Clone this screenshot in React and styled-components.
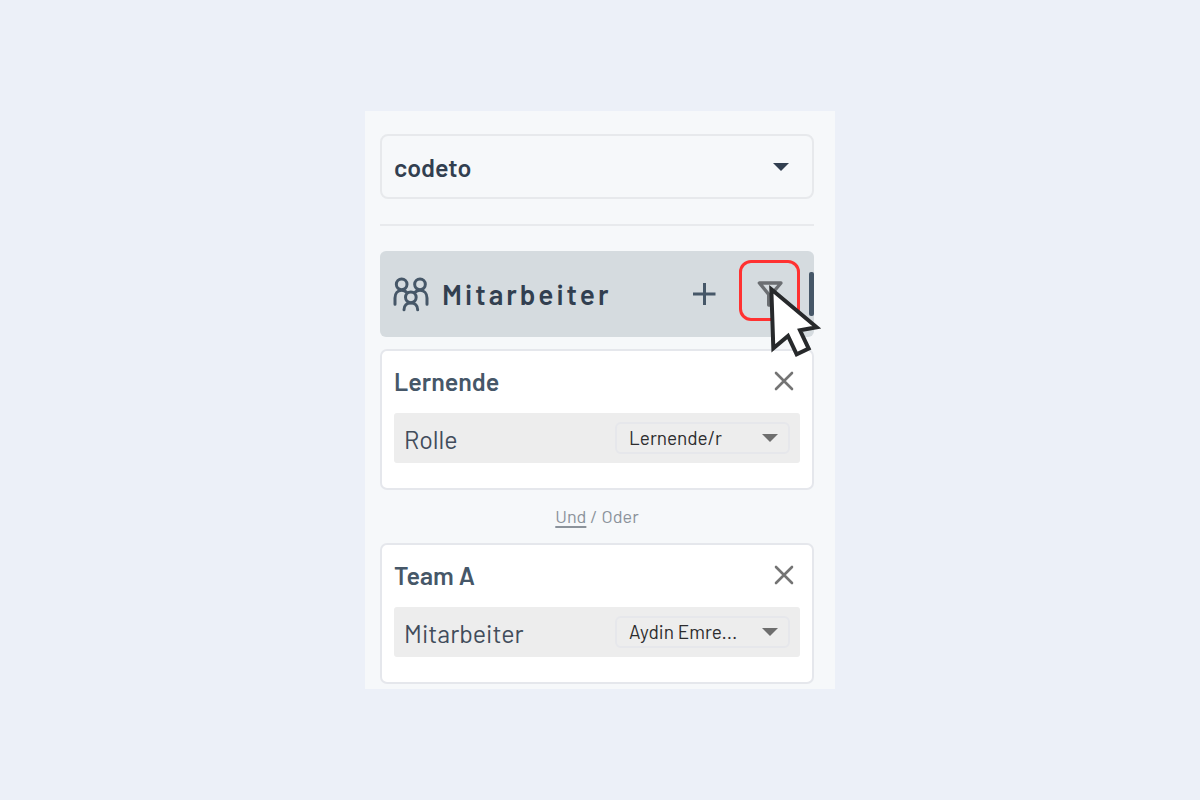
import React from "react";
import styled, { createGlobalStyle } from "styled-components";

const GlobalStyle = createGlobalStyle`
  *, *::before, *::after { box-sizing: border-box; }
  body {
    margin: 0;
    background: #ecf0f8;
    font-family: Barlow, Roboto, "Liberation Sans", sans-serif;
    color: #323f50;
  }
  button, select { font: inherit; color: inherit; }
`;

const Page = styled.main`
  min-height: 100vh;
  display: flex;
  align-items: center;
  justify-content: center;
`;

const Panel = styled.aside`
  width: 100%;
  max-width: 470px;
  padding: 23px 21px 5px 15px;
  background: #f6f8fa;
`;

const SelectBox = styled.div`
  position: relative;
  width: ${(p) => (p.$small ? "175px" : "100%")};
  color: ${(p) => (p.$small ? "#6e6e6e" : "#323f50")};
`;

const Select = styled.select`
  appearance: none;
  display: block;
  width: 100%;
  height: ${(p) => (p.$small ? "32px" : "65px")};
  padding: 0 ${(p) => (p.$small ? "32px" : "48px")} ${(p) => (p.$small ? "2px" : "0")} 12px;
  border: 2px solid ${(p) => (p.$small ? "#e6e7eb" : "#e7e9ec")};
  border-radius: ${(p) => (p.$small ? "6px" : "8px")};
  background: transparent;
  color: ${(p) => (p.$small ? "#2c2c2e" : "#323f50")};
  font-size: ${(p) => (p.$small ? "19px" : "25px")};
  font-weight: ${(p) => (p.$small ? 400 : 600)};
`;

const Arrow = styled.svg`
  position: absolute;
  top: 50%;
  right: ${(p) => (p.$small ? "12px" : "25px")};
  margin-top: -4px;
  pointer-events: none;
`;

const Divider = styled.hr`
  height: 2px;
  margin: 25px 0;
  border: 0;
  background: #e8eaed;
`;

const SectionHeader = styled.header`
  display: flex;
  align-items: center;
  height: 86px;
  margin-bottom: 12px;
  padding-left: 13px;
  border-radius: 6px;
  background: #d5dbdf;
`;

const SectionTitle = styled.h1`
  flex: 1;
  margin: 0 0 0 13px;
  font-size: 28px;
  line-height: 34px;
  font-weight: 600;
  letter-spacing: 3px;
`;

const IconButton = styled.button`
  display: grid;
  place-items: center;
  width: 32px;
  height: 32px;
  padding: 0;
  border: 0;
  background: transparent;
  color: ${(p) => p.$color};
  cursor: pointer;
`;

const FilterSlot = styled.div`
  position: relative;
  align-self: stretch;
  display: grid;
  place-items: center;
  width: 61px;
  margin: 0 9px 0 19px;
`;

const Highlight = styled.span`
  position: absolute;
  top: 9px;
  left: 0;
  width: 61px;
  height: 61px;
  border: 3px solid #ff3131;
  border-radius: 12px;
  pointer-events: none;
`;

const Pointer = styled.svg`
  position: absolute;
  top: 33px;
  left: 29px;
  z-index: 1;
  pointer-events: none;
`;

const ActiveBar = styled.span`
  width: 5px;
  height: 44px;
  border-radius: 2px;
  background: #465768;
`;

const Card = styled.section`
  padding: 10px 12px 25px;
  border: 2px solid #e5e7ec;
  border-radius: 7px;
  background: #fff;
`;

const CardHead = styled.div`
  display: flex;
  align-items: center;
  justify-content: space-between;
  height: 40px;
  margin-bottom: 12px;
`;

const CardTitle = styled.h2`
  margin: 0;
  color: #465768;
  font-size: 25px;
  line-height: 30px;
  font-weight: 600;
`;

const Field = styled.div`
  display: flex;
  align-items: center;
  justify-content: space-between;
  height: 50px;
  padding: 0 10px;
  border-radius: 3px;
  background: #ededed;
`;

const FieldLabel = styled.label`
  padding-top: 2px;
  color: #414c5b;
  font-size: 25px;
  line-height: 30px;
`;

const Joiner = styled.div`
  display: flex;
  align-items: center;
  justify-content: center;
  gap: 4px;
  height: 53px;
  padding-bottom: 2px;
  color: #8b929a;
  font-size: 18px;
  line-height: 22px;
`;

const JoinerOption = styled.button`
  padding: 0;
  border: 0;
  background: transparent;
  text-decoration: ${(p) => (p.$active ? "underline" : "none")};
  text-decoration-thickness: 2px;
  text-underline-offset: 3px;
  cursor: pointer;
`;

function Dropdown({ id, label, value, small }) {
  return (
    <SelectBox $small={small}>
      <Select id={id} aria-label={label} $small={small} defaultValue={value}>
        <option>{value}</option>
      </Select>
      <Arrow $small={small} width="16" height="8" viewBox="0 0 16 8" aria-hidden="true">
        <path d="M0 0H16L8 8Z" fill="currentColor" />
      </Arrow>
    </SelectBox>
  );
}

function PeopleIcon() {
  return (
    <svg width="36" height="35" viewBox="69 109 108 105" fill="none" stroke="#465768" strokeWidth="9" strokeLinecap="round" aria-hidden="true">
      <circle cx="95" cy="131" r="16" />
      <circle cx="150" cy="131" r="16" />
      <circle cx="122.500" cy="170" r="16" />
      <path d="M75 191V172C75 158 83 149 95 149C101 149 106 151 110 155" />
      <path d="M171 191V172C171 158 162 149 150 149C144 149 139 151 135 155" />
      <path d="M102 207C102 195 110 187 122.500 187S143 195 143 207" />
    </svg>
  );
}

function FilterCard({ id, title, label, value }) {
  return (
    <Card>
      <CardHead>
        <CardTitle>{title}</CardTitle>
        <IconButton $color="#747474" aria-label={`${title} entfernen`}>
          <svg width="20" height="20" viewBox="0 0 20 20" aria-hidden="true">
            <path d="M2 2L18 18M18 2L2 18" stroke="currentColor" strokeWidth="2.600" strokeLinecap="round" />
          </svg>
        </IconButton>
      </CardHead>
      <Field>
        <FieldLabel htmlFor={id}>{label}</FieldLabel>
        <Dropdown id={id} value={value} small />
      </Field>
    </Card>
  );
}

export default function App() {
  return (
    <>
      <GlobalStyle />
      <Page>
        <Panel>
          <Dropdown id="workspace" label="Firma" value="codeto" />
          <Divider />
          <SectionHeader>
            <PeopleIcon />
            <SectionTitle>Mitarbeiter</SectionTitle>
            <IconButton $color="#465768" aria-label="Hinzufügen">
              <svg width="24" height="24" viewBox="0 0 24 24" aria-hidden="true">
                <path d="M12.500 1V23M1 12H23.500" stroke="currentColor" strokeWidth="3" />
              </svg>
            </IconButton>
            <FilterSlot>
              <IconButton $color="#6b6e72" aria-label="Filtern">
                <svg width="26" height="26" viewBox="231 122 78 78" aria-hidden="true">
                  <path d="M238 128H303L274 162V194H266V162Z" fill="none" stroke="currentColor" strokeWidth="10" strokeLinejoin="round" />
                </svg>
              </IconButton>
              <Highlight />
              <Pointer width="54" height="75" viewBox="264 132 162 225" aria-hidden="true">
                <path d="M274 148L410 262L360 271L386 326L350 343L324 288L280 325Z" fill="#fff" stroke="#27292b" strokeWidth="12" strokeMiterlimit="8" />
              </Pointer>
            </FilterSlot>
            <ActiveBar />
          </SectionHeader>
          <FilterCard id="role" title="Lernende" label="Rolle" value="Lernende/r" />
          <Joiner>
            <JoinerOption $active>Und</JoinerOption>
            <span>/</span>
            <JoinerOption>Oder</JoinerOption>
          </Joiner>
          <FilterCard id="member" title="Team A" label="Mitarbeiter" value="Aydin Emre..." />
        </Panel>
      </Page>
    </>
  );
}
